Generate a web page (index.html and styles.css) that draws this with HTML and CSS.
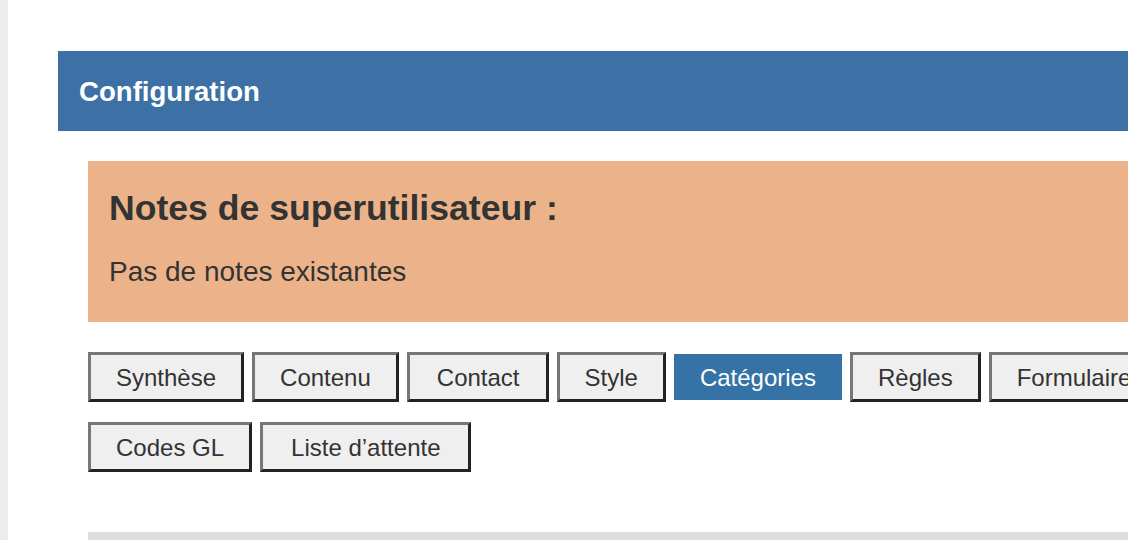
FILE: index.html
```html
<!DOCTYPE html>
<html lang="fr">
<head>
<meta charset="utf-8">
<title>Configuration</title>
<link rel="stylesheet" href="styles.css">
</head>
<body>
<div class="page">
  <div class="sidebar"></div>
  <main class="main">
    <div class="panel-header">Configuration</div>
    <div class="panel-body">
      <section class="notes">
        <h2 class="notes-title">Notes de superutilisateur :</h2>
        <p class="notes-text">Pas de notes existantes</p>
      </section>
      <nav class="tabs">
        <div class="tab-row">
          <button class="tab">Synthèse</button>
          <button class="tab">Contenu</button>
          <button class="tab tab-wide">Contact</button>
          <button class="tab">Style</button>
          <button class="tab tab-active">Catégories</button>
          <button class="tab">Règles</button>
          <button class="tab">Formulaire</button>
        </div>
        <div class="tab-row">
          <button class="tab">Codes GL</button>
          <button class="tab tab-wider">Liste d’attente</button>
        </div>
      </nav>
      <div class="section-bar"></div>
    </div>
  </main>
</div>
</body>
</html>
```

FILE: styles.css
```css
html, body {
  margin: 0;
  padding: 0;
  background: #ffffff;
  overflow: hidden;
}

body {
  font-family: "Liberation Sans", Arial, Helvetica, sans-serif;
  color: #333333;
}

.page {
  display: flex;
  width: 1400px;
  min-height: 540px;
}

.sidebar {
  width: 8px;
  flex: none;
  background: #ececec;
}

.main {
  flex: 1;
  padding: 51px 0 0 50px;
}

.panel-header {
  height: 80px;
  display: flex;
  align-items: center;
  padding-left: 21px;
  padding-top: 2px;
  box-sizing: border-box;
  background: #3d71a6;
  color: #ffffff;
  font-size: 27.6px;
  font-weight: bold;
}

.panel-body {
  padding: 30px 0 0 30px;
}

.notes {
  background: #ecb38a;
  padding: 27px 21px 34px;
}

.notes-title {
  margin: 0;
  font-size: 35.6px;
  line-height: 40px;
  font-weight: bold;
  color: #333333;
}

.notes-text {
  margin: 28px 0 0;
  font-size: 28px;
  line-height: 32px;
  color: #333333;
}

.tabs {
  display: flex;
  flex-direction: column;
  gap: 20px;
  margin-top: 30px;
}

.tab-row {
  display: flex;
  align-items: center;
  gap: 8px;
}

.tab {
  height: 50px;
  box-sizing: border-box;
  padding: 1px 25px 0;
  border: 3px solid;
  border-color: #777777 #222222 #222222 #777777;
  background: #efefef;
  color: #333333;
  font-family: "Liberation Sans", Arial, Helvetica, sans-serif;
  font-size: 24px;
  white-space: nowrap;
  flex: none;
}

.tab-wide {
  padding: 1px 26px 0 27px;
}

.tab-wider {
  padding: 1px 27px 0 28px;
}

.tab-active {
  height: 46px;
  border: 0;
  padding: 1px 26px 0;
  background: #3572a5;
  color: #ffffff;
}

.section-bar {
  margin-top: 60px;
  height: 20px;
  background: #dddddd;
}
```
